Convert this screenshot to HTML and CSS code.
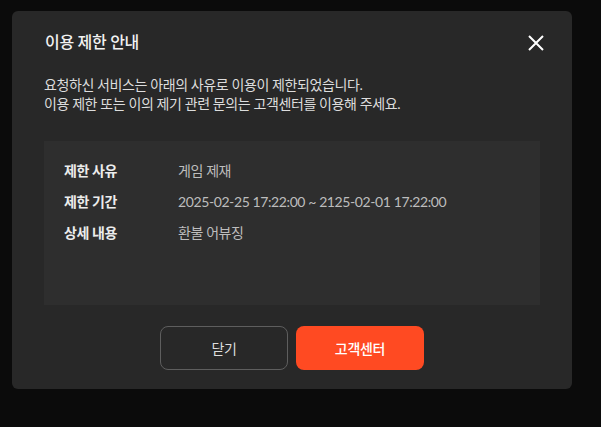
FILE: index.html
```html
<!DOCTYPE html>
<html lang="ko">
<head>
    <meta charset="UTF-8">
    <meta name="viewport" content="width=device-width, initial-scale=1.0">
    <title>이용 제한 안내</title>
    <link rel="stylesheet" href="styles.css">
</head>
<body>
    <div class="modal">
        <div class="modal-header">
            <h2>이용 제한 안내</h2>
            <button class="close-btn" aria-label="닫기">
                <svg width="16" height="16" viewBox="0 0 16 16">
                    <path d="M1 1L15 15M15 1L1 15" stroke="#ffffff" stroke-width="2" fill="none"/>
                </svg>
            </button>
        </div>
        <p class="desc">요청하신 서비스는 아래의 사유로 이용이 제한되었습니다.<br>이용 제한 또는 이의 제기 관련 문의는 고객센터를 이용해 주세요.</p>
        <div class="info-box">
            <div class="info-row">
                <span class="label">제한 사유</span>
                <span class="value">게임 제재</span>
            </div>
            <div class="info-row">
                <span class="label">제한 기간</span>
                <span class="value">2025-02-25 17:22:00 ~ 2125-02-01 17:22:00</span>
            </div>
            <div class="info-row">
                <span class="label">상세 내용</span>
                <span class="value">환불 어뷰징</span>
            </div>
        </div>
        <div class="buttons">
            <button class="btn btn-close">닫기</button>
            <button class="btn btn-support">고객센터</button>
        </div>
    </div>
</body>
</html>
```

FILE: styles.css
```css
* {
    box-sizing: border-box;
    margin: 0;
    padding: 0;
}
body {
    background-color: #0b0b0b;
    padding: 11px 0 0 12px;
    font-family: Lato, "Noto Sans CJK KR", sans-serif;
    letter-spacing: -0.4px;
    color: #e6e6e6;
    min-height: 100vh;
}
.modal {
    width: 560px;
    height: 378px;
    background-color: #282828;
    border-radius: 6px;
    padding: 19px 32px 18px 32px;
    display: flex;
    flex-direction: column;
}
.modal-header {
    display: flex;
    justify-content: space-between;
    align-items: center;
    height: 24px;
}
.modal-header h2 {
    font-size: 16px;
    font-weight: 500;
    line-height: 24px;
    color: #f2f2f2;
    padding-left: 1px;
    letter-spacing: -0.3px;
}
.close-btn {
    background: none;
    border: none;
    width: 16px;
    height: 16px;
    margin-right: -4px;
    margin-top: 1px;
    cursor: pointer;
    display: flex;
}
.desc {
    margin-top: 21px;
    font-size: 14px;
    line-height: 19px;
    color: #dddddd;
}
.info-box {
    margin-top: 28px;
    height: 164px;
    background-color: #2e2e2e;
    padding: 20px 20px;
    display: flex;
    flex-direction: column;
    gap: 11px;
}
.info-row {
    display: flex;
    font-size: 14px;
    line-height: 20px;
}
.label {
    width: 114px;
    flex-shrink: 0;
    font-weight: 700;
    color: #ececec;
}
.value {
    color: #bdbdbd;
}
.buttons {
    margin-top: 21px;
    display: flex;
    justify-content: center;
    gap: 8px;
}
.btn {
    width: 128px;
    height: 44px;
    border-radius: 8px;
    font-family: inherit;
    font-size: 14px;
    letter-spacing: -0.3px;
    cursor: pointer;
}
.btn-close {
    background-color: transparent;
    border: 1px solid #5e5e5e;
    color: #dddddd;
}
.btn-support {
    background-color: #ff4a22;
    border: none;
    color: #ffffff;
    font-weight: 500;
}
```
